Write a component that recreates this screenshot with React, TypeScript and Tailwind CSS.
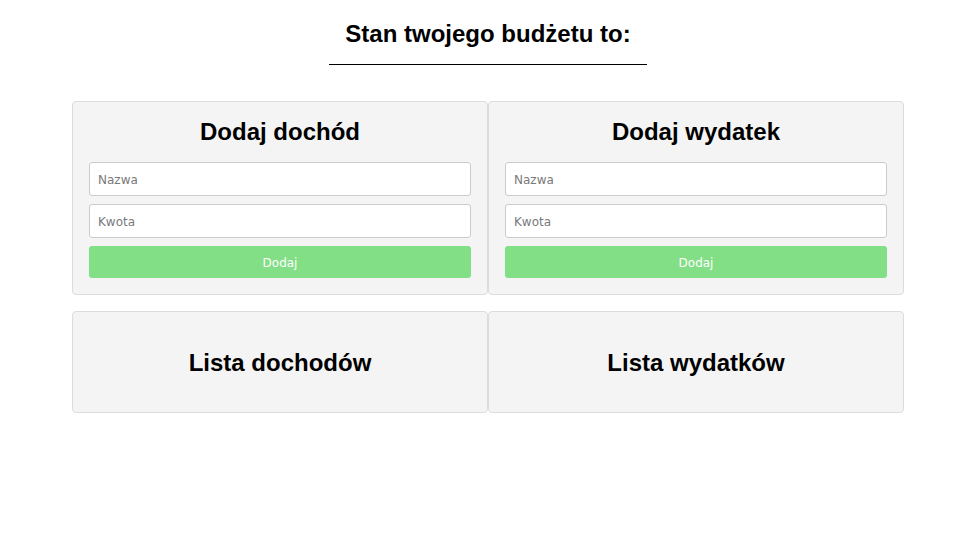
import { FC } from 'react';

const AddCard: FC<{ title: string }> = ({ title }) => (
  <div className="w-[416px] rounded-[4px] border border-[#dcdcdc] bg-[#f4f4f4] px-4 pt-4 pb-4">
    <h2 className="text-center text-[24px] font-bold leading-[27px] text-black">{title}</h2>
    <div className="mt-[17px] flex flex-col gap-2">
      <input
        placeholder="Nazwa"
        className="h-[34px] w-full rounded-[3px] border border-[#cccccc] bg-white px-2 pt-px text-[12px] text-black outline-none placeholder:text-[#7a7a7a] [font-family:'DejaVu_Sans',sans-serif]"
      />
      <input
        placeholder="Kwota"
        className="h-[34px] w-full rounded-[3px] border border-[#cccccc] bg-white px-2 pt-px text-[12px] text-black outline-none placeholder:text-[#7a7a7a] [font-family:'DejaVu_Sans',sans-serif]"
      />
      <button className="h-[32px] w-full rounded-[3px] bg-[#83df86] pt-px text-[12px] text-white [font-family:'DejaVu_Sans',sans-serif]">
        Dodaj
      </button>
    </div>
  </div>
);

const ListCard: FC<{ title: string }> = ({ title }) => (
  <div className="flex h-[102px] w-[416px] items-center justify-center rounded-[4px] border border-[#dcdcdc] bg-[#f4f4f4]">
    <h2 className="text-center text-[24px] font-bold leading-[27px] text-black">{title}</h2>
  </div>
);

export default function App() {
  return (
    <div className="min-h-[537px] bg-white [font-family:'Liberation_Sans',Arial,sans-serif]">
      <div className="ml-[72px] w-[832px] pt-5">
        <div className="flex flex-col items-center">
          <h1 className="text-[24px] font-bold leading-[27px] text-black">Stan twojego budżetu to:</h1>
          <div className="mt-[17px] h-px w-[318px] bg-black" />
        </div>

        <div className="mt-9 flex">
          <AddCard title="Dodaj dochód" />
          <AddCard title="Dodaj wydatek" />
        </div>

        <div className="mt-4 flex">
          <ListCard title="Lista dochodów" />
          <ListCard title="Lista wydatków" />
        </div>
      </div>
    </div>
  );
}
